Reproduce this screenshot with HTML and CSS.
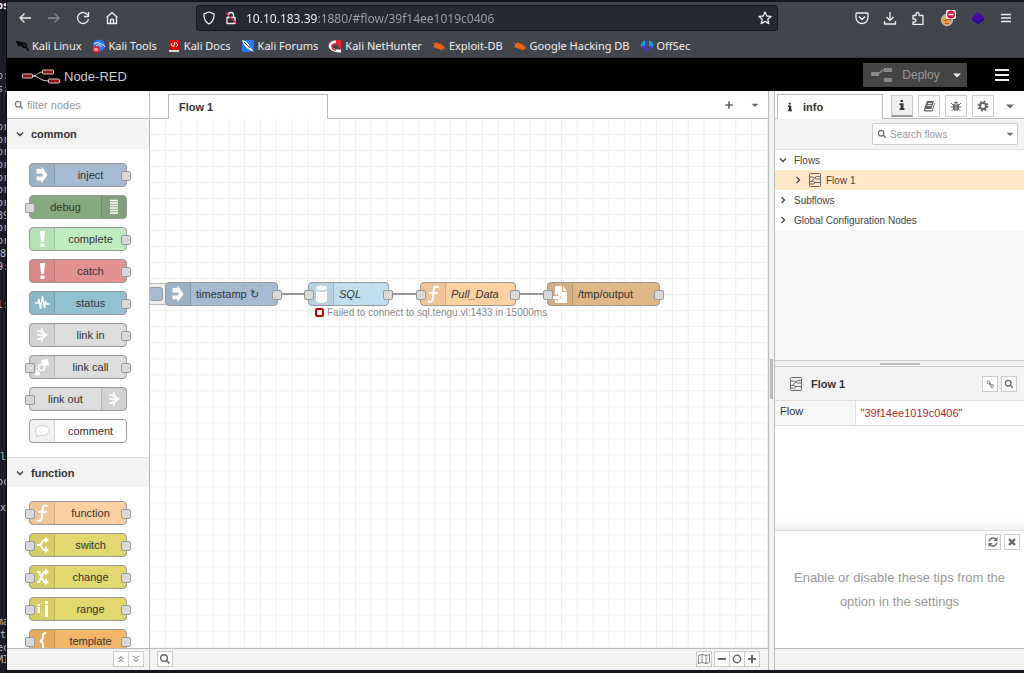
FILE: index.html
```
<!DOCTYPE html>
<html lang="en">

<head>
    <meta charset="utf-8">
    <title>Node-RED</title>
    <link rel="stylesheet" href="styles.css">
</head>

<body>

    <!-- shared icons -->
    <svg class="sprite" aria-hidden="true">
        <symbol id="i-inject" viewBox="1 1 22 22"><path fill="#fff" d="M6.500 6h5V3.500L17.500 12l-6 8.500v-3h-5v-4H12l1-1.500-1-1.500H6.500z"/></symbol>
        <symbol id="i-debug" viewBox="1 1 22 22"><path stroke="#fff" stroke-width="1.400" d="M8 5.500h8M8 8h8M8 10.500h8M8 13h8M8 15.500h8M8 18h8"/></symbol>
        <symbol id="i-alert" viewBox="1 1 22 22"><path fill="#fff" d="M10 4h5l-1 11h-3zM10.500 16.500h4v3.500h-4z"/></symbol>
        <symbol id="i-status" viewBox="1 1 22 22"><path fill="none" stroke="#fff" stroke-width="1.500" d="M5 12h3l1-4 1.500 10 2-13 2 12 1-7 1 3h3"/></symbol>
        <symbol id="i-link" viewBox="1 1 22 22"><path fill="#fff" d="M11 4l3 5 4 3-4 3-3 5.500V16l1.500-1v-6L11 8z"/><path fill="none" stroke="#fff" stroke-width="1.500" d="M7 7.500c3 0 4 1 4.500 2.500M7 16.500c3 0 4-1 4.500-2.500M7 12h6"/></symbol>
        <symbol id="i-call" viewBox="1 1 22 22"><path fill="#fff" d="M11 5l7-1 1 7-2-1-2 2-4-4 1-1.500zM6 14l4 4-1 3-4-1z"/><circle cx="11.500" cy="12.500" r="3" fill="none" stroke="#fff" stroke-width="1.500"/></symbol>
        <symbol id="i-comment" viewBox="1 1 22 22"><path fill="#fff" stroke="#ccc" d="M12.500 6.500c4 0 6.500 2 6.500 5s-3 5-6.500 5c-1 0-2 0-3-.500-1 1.500-2 2-3.500 2 1-1 1.500-2 1-3-1-1-1.500-2-1.500-3.500 0-3 3-5 7-5z"/></symbol>
        <symbol id="i-fn" viewBox="1 1 22 22"><path fill="none" stroke="#fff" stroke-width="2" stroke-linecap="round" d="M17 5c-3-1.500-4 0-4.300 3l-.7 8c-.3 3.500-2 4.500-4.500 3.500M9 11h7"/></symbol>
        <symbol id="i-switch" viewBox="1 1 22 22"><path fill="none" stroke="#fff" stroke-width="2" d="M7 12h3l4-5h2M10 12l4 5h2"/><path fill="#fff" d="M15 3.500l4 3.500-4 3.500zM15 13.500l4 3.500-4 3.500z"/></symbol>
        <symbol id="i-change" viewBox="1 1 22 22"><path fill="none" stroke="#fff" stroke-width="2" d="M7 7h2l5 10h2M7 17h2l5-10h2"/><path fill="#fff" d="M15 3.500l4 3.500-4 3.500zM15 13.500l4 3.500-4 3.500z"/></symbol>
        <symbol id="i-range" viewBox="1 1 22 22"><path fill="#fff" d="M7.500 7h2.500v2H7.500zM7.500 10h2.500v6H7.500zM15 4h3v3h-3zM15 8h3v12h-3z"/><path stroke="#fff" stroke-dasharray="1 1.500" d="M11 7l4-3M11 16l4 4"/></symbol>
        <symbol id="i-template" viewBox="1 1 22 22"><path fill="none" stroke="#fff" stroke-width="2" d="M16 4c-3 0-3 1-3 4 0 2-1 3.500-3 4 2 .5 3 2 3 4 0 3 0 4 3 4"/></symbol>
        <symbol id="i-db" viewBox="1 1 22 22"><path fill="#fff" d="M7 8.500c2 2 9 2 11 0V19c-2 2.500-9 2.500-11 0z"/><ellipse cx="12.500" cy="6" rx="5.500" ry="2.300" fill="#fff"/></symbol>
        <symbol id="i-file" viewBox="1 1 22 22"><path fill="#fff" d="M7 4h7v6h5v11H7v-3h2v2l5-4.500-5-4.500v2H7z"/><path fill="#fff" d="M15 4l4 5h-4zM4 14h6v-2.500l3 4-3 4V17H4z"/></symbol>
        <symbol id="i-search" viewBox="0 0 12 12"><circle cx="5" cy="5" r="3.300" fill="none" stroke="currentColor" stroke-width="1.400"/><path stroke="currentColor" stroke-width="1.700" d="M7.500 7.500l3 3"/></symbol>
        <symbol id="i-right" viewBox="0 0 12 12"><path fill="none" stroke="currentColor" stroke-width="1.300" d="M4.500 3l3 3-3 3"/></symbol>
        <symbol id="i-down" viewBox="0 0 12 12"><path fill="none" stroke="currentColor" stroke-width="1.300" d="M3 4.500l3 3 3-3"/></symbol>
        <symbol id="i-caret" viewBox="0 0 12 12"><path fill="currentColor" d="M2 4.500h8L6 8.500z"/></symbol>
        <symbol id="i-flow" viewBox="1 1 12 14"><g fill="none" stroke="currentColor"><rect x="1.500" y="1.500" width="11" height="13" rx="1"/><rect x="7.500" y="4.500" width="5" height="2.500" rx="1"/><rect x="1.500" y="9.500" width="5" height="2.500" rx="1"/><path d="M1.500 5h2.500c2 0 1 1 3.500 1M6.500 10.500h6M4 9.500c0-2 3-3.500 3.500-3.500"/></g></symbol>
        <symbol id="i-info" viewBox="0 0 12 12"><path fill="currentColor" d="M4.500 1h2.500v2H4.500zM3.500 4.300H7.500v5H8.500V11h-5V9.300h1.200V6H3.500z"/></symbol>
        <symbol id="i-dragon" viewBox="0 0 14 14"><path fill="none" stroke="#050505" stroke-width="1.600" d="M1 2.500l6 1.500 3 .5 2 2.500M2 5l5-1M3 7l4-2c0 3 4 3 5 4s1 3 1 3M7 6c0 2 1 2 3 2.500"/></symbol>
        <symbol id="i-bug-db" viewBox="0 0 14 14"><path fill="#f26211" d="M1 4l3 .5L5 3l1.500 1.500L9 5l2 2 2 1-1 1 1 1.500-2.500-.5L9 11.500 7.500 10 5 9.500 3 8.500 1 8l1.500-1.500z"/></symbol>
    </svg>

    <!-- terminal behind the browser -->
    <div class="terminal" aria-hidden="true">
        <div class="term-top"><span>os</span></div>
        <div class="term-rows">
            <span class="r1">o:</span><span class="r2">s:</span>
            <span class="r5">or</span><span class="r6">or</span><span class="r7">or</span><span class="r8">or</span><span class="r9">or</span><span class="r10">or</span><span class="r11">or</span><span class="r12">39</span><span class="r13">or</span><span class="r14">or</span><span class="r15">8</span><span class="r16">9:</span>
            <span class="r19">l:</span><span class="r31">l</span><span class="r33">oc</span><span class="r35">x</span>
            <span class="r44">ma</span><span class="r45">t</span><span class="r46">ec</span><span class="r47">MI</span>
        </div>
    </div>

    <div class="window">

        <nav class="toolbar">
            <div class="nav-buttons">
                <button type="button" aria-label="Back"><svg viewBox="0 0 14 14"><path d="M13 7H2M6.500 2.500L2 7l4.500 4.500"/></svg></button>
                <button type="button" aria-label="Forward" disabled><svg viewBox="0 0 14 14"><path d="M1 7h11M7.500 2.500L12 7l-4.500 4.500"/></svg></button>
                <button type="button" aria-label="Reload"><svg viewBox="0 0 14 14"><path d="M12 4.500A5.500 5.500 0 1 0 12.500 8"/><path d="M12.500 1v4.500H8"/></svg></button>
                <button type="button" aria-label="Home"><svg viewBox="0 0 14 14"><path d="M1.500 6.500L7 1.500l5.500 5M2.500 6v6.500h9V6M5.500 12.500v-4h3v4"/></svg></button>
            </div>
            <div class="urlbar">
                <svg class="url-icon" viewBox="0 0 14 14"><path d="M7 1l5 1.800c.3 5-1.500 8.500-5 10.200-3.500-1.700-5.300-5.200-5-10.200z"/></svg>
                <svg class="url-icon" viewBox="0 0 14 14"><path d="M3 6.500h8v6H3zM4.500 6.500V4a2.500 2.500 0 0 1 5 0v2.500"/><path class="slash" d="M1.500 1.500l11 11"/></svg>
                <input class="url" type="text" aria-label="Address" value="10.10.183.39:1880/#flow/39f14ee1019c0406">
                <button type="button" aria-label="Bookmark this page"><svg viewBox="0 0 14 14"><path d="M7 1l1.800 4 4.200.4-3.200 2.900 1 4.300L7 10.400l-3.800 2.200 1-4.300L1 5.400 5.200 5z"/></svg></button>
            </div>
            <div class="ext-buttons">
                <button type="button" aria-label="Pocket"><svg viewBox="0 0 14 14"><path d="M2 2h10c.6 0 1 .4 1 1v3.500a6 6 0 0 1-12 0V3c0-.6.4-1 1-1zM4 5.500l3 3 3-3"/></svg></button>
                <button type="button" aria-label="Downloads"><svg viewBox="0 0 14 14"><path d="M7 1v8M3.500 6L7 9.500 10.500 6M1.500 10v3h11v-3"/></svg></button>
                <button type="button" aria-label="Extensions"><svg viewBox="0 0 14 14"><path d="M2 4.500h3V3a1.500 1.500 0 0 1 3 0v1.500h4v9H2V11h1.500a1.500 1.500 0 0 0 0-3H2z"/></svg></button>
                <button class="wide" type="button" aria-label="FoxyProxy"><svg viewBox="0 0 18 18"><circle cx="8" cy="11" r="5.500" fill="#f0a050" stroke="#bbb"/><path fill="none" stroke="#a8622a" d="M4.500 11c1.500 1 2.500 1 3.500 0s2-1 4 0M6 14c2 1 3 1 4 0"/><rect x="7" y="1" width="10" height="9" rx="2" fill="#fff" stroke="none"/><circle cx="12" cy="5.500" r="4" fill="#d3143a" stroke="none"/><path stroke="#fff" stroke-width="1.500" d="M9.500 5.500h5"/></svg></button>
                <button type="button" aria-label="Wappalyzer"><svg viewBox="0 0 14 14"><path fill="#230a8c" stroke="none" d="M1 7l6 3 6-3v2l-6 4.500L1 9z"/><path fill="#4608ad" stroke="none" d="M7 1l6 5.500L7 11 1 6.500z"/></svg></button>
                <button type="button" aria-label="Menu"><svg viewBox="0 0 14 14"><path d="M2 3.500h10M2 7h10M2 10.500h10"/></svg></button>
            </div>
        </nav>

        <nav class="bookmarks">
            <a href="#"><svg><use href="#i-dragon"/></svg>Kali Linux</a>
            <a href="#"><svg viewBox="0 0 14 14"><circle cx="7" cy="6.500" r="6" fill="#2777ff"/><path fill="none" stroke="#fff" d="M2 5c3-2 6-1 7 0s3 0 4 3M4 7c2-2 5-1 5 1"/><circle cx="4" cy="10.500" r="3.500" fill="#e0202c"/><path stroke="#fff" d="M3 9v3M5 9v3"/></svg>Kali Tools</a>
            <a href="#"><svg viewBox="0 0 14 14"><path fill="#e10600" d="M2 1h10v10H2z"/><path fill="#ddd" d="M2 11h10v2H2z"/><path fill="none" stroke="#fff" d="M5 4L4 6l2 1M9 4l2 2-2 1.500M8 3L6.500 8"/></svg>Kali Docs</a>
            <a href="#"><svg viewBox="0 0 14 14"><path fill="#257cff" d="M1 1h12v9l-3 3H1z"/><path fill="#fff" d="M1 1l5 2 3 5 4 5-6-3-4-4z"/><path stroke="#333" d="M3 3l6 6"/></svg>Kali Forums</a>
            <a href="#"><svg viewBox="0 0 14 14"><path fill="#f22438" d="M5 1h8v10z"/><path fill="none" stroke="#fff" stroke-width="3" d="M8 3C3 3 1 6 3 9s6 3 10 3"/><path fill="none" stroke="#e22435" stroke-width="1.500" d="M8 5c-5-1-6 6 0 6"/></svg>Kali NetHunter</a>
            <a href="#"><svg><use href="#i-bug-db"/></svg>Exploit-DB</a>
            <a href="#"><svg><use href="#i-bug-db"/></svg>Google Hacking DB</a>
            <a href="#"><svg viewBox="0 0 14 14"><path fill="#11a5d5" d="M5 1.500v9C-1 9-.500 3 5 1.500zM9 1.500v9c6-1.500 5.500-7.500 0-9z"/><path fill="#5633dd" d="M1.300 7H5v4C3 10.500 2 9 1.300 7zM9 7h3.700c-.7 2-1.700 3.500-3.700 4zM6.200 1h1.600v12H6.200z"/></svg>OffSec</a>
        </nav>

        <header class="red-header">
            <a class="logo" href="#">
                <svg viewBox="0 0 38 16"><path fill="none" stroke="#ddd" d="M10 8c6 0 5-4 11-4M10 8c8 0 7 5 17 5"/><g fill="#8f1010" stroke="#ccc"><rect x=".5" y="6" width="10" height="4" rx="1"/><rect x="20.500" y="2" width="11" height="4" rx="1"/><rect x="26.500" y="11" width="11" height="4" rx="1"/></g></svg>
                <span>Node-RED</span>
            </a>
            <div class="deploy-group">
                <button class="deploy" type="button" disabled>
                    <svg viewBox="0 0 24 16"><path fill="none" stroke="#888" stroke-width="1.500" d="M6 7c5 0 4-4 9-4"/><path fill="#888" d="M1 5h8v4H1zM14 1h8v4h-8zM14 11h8v4h-8z"/></svg>
                    Deploy
                </button>
                <button class="deploy-menu" type="button" aria-label="Deploy options"><svg><use href="#i-caret"/></svg></button>
            </div>
            <button class="main-menu" type="button" aria-label="Main menu"><i></i><i></i><i></i></button>
        </header>

        <main class="editor">

            <aside class="palette">
                <label class="filter">
                    <svg><use href="#i-search"/></svg>
                    <input type="text" placeholder="filter nodes" aria-label="filter nodes">
                </label>
                <div class="palette-scroll">
                    <h3 class="category"><svg><use href="#i-down"/></svg>common</h3>
                    <div class="category-nodes">
                        <div class="node c-inject out"><svg class="icon"><use href="#i-inject"/></svg><span>inject</span></div>
                        <div class="node c-debug in flip"><svg class="icon"><use href="#i-debug"/></svg><span>debug</span></div>
                        <div class="node c-complete out"><svg class="icon"><use href="#i-alert"/></svg><span>complete</span></div>
                        <div class="node c-catch out"><svg class="icon"><use href="#i-alert"/></svg><span>catch</span></div>
                        <div class="node c-status out"><svg class="icon"><use href="#i-status"/></svg><span>status</span></div>
                        <div class="node c-link out"><svg class="icon"><use href="#i-link"/></svg><span>link in</span></div>
                        <div class="node c-link in out"><svg class="icon"><use href="#i-call"/></svg><span>link call</span></div>
                        <div class="node c-link in flip"><svg class="icon"><use href="#i-link"/></svg><span>link out</span></div>
                        <div class="node c-comment"><svg class="icon"><use href="#i-comment"/></svg><span>comment</span></div>
                    </div>
                    <h3 class="category"><svg><use href="#i-down"/></svg>function</h3>
                    <div class="category-nodes">
                        <div class="node c-function in out"><svg class="icon"><use href="#i-fn"/></svg><span>function</span></div>
                        <div class="node c-switch in out"><svg class="icon"><use href="#i-switch"/></svg><span>switch</span></div>
                        <div class="node c-switch in out"><svg class="icon"><use href="#i-change"/></svg><span>change</span></div>
                        <div class="node c-switch in out"><svg class="icon"><use href="#i-range"/></svg><span>range</span></div>
                        <div class="node c-template in out"><svg class="icon"><use href="#i-template"/></svg><span>template</span></div>
                    </div>
                </div>
                <footer class="footer palette-footer">
                    <div class="btn-group">
                        <button class="btn" type="button" aria-label="Collapse all"><svg viewBox="0 0 12 12"><path fill="none" stroke="currentColor" d="M3.500 6L6 3.500 8.500 6M3.500 9L6 6.500 8.500 9"/></svg></button>
                        <button class="btn" type="button" aria-label="Expand all"><svg viewBox="0 0 12 12"><path fill="none" stroke="currentColor" d="M3.500 3L6 5.500 8.500 3M3.500 6L6 8.500 8.500 6"/></svg></button>
                    </div>
                </footer>
            </aside>

            <section class="workspace">
                <div class="tabs">
                    <a class="tab flow-tab" href="#">Flow 1</a>
                    <div class="tab-tools">
                        <button type="button" aria-label="Add flow"><svg viewBox="0 0 12 12"><path stroke="currentColor" stroke-width="2" d="M6 1.500v9M1.500 6h9"/></svg></button>
                        <button type="button" aria-label="List flows"><svg><use href="#i-caret"/></svg></button>
                    </div>
                </div>
                <div class="canvas">
                    <div class="inject-button"><button type="button" aria-label="Inject"></button></div>
                    <div class="wire w1"></div>
                    <div class="wire w2"></div>
                    <div class="wire w3"></div>
                    <div class="node c-inject out n-timestamp"><svg class="icon"><use href="#i-inject"/></svg><span>timestamp ↻</span></div>
                    <div class="node c-sql in out n-sql"><svg class="icon"><use href="#i-db"/></svg><em>SQL</em></div>
                    <div class="node c-function in out n-pull"><svg class="icon"><use href="#i-fn"/></svg><em>Pull_Data</em></div>
                    <div class="node c-file in out n-output"><svg class="icon"><use href="#i-file"/></svg><span>/tmp/output</span></div>
                    <div class="node-status"><i></i>Failed to connect to sql.tengu.vl:1433 in 15000ms</div>
                </div>
                <footer class="footer">
                    <button class="btn" type="button" aria-label="Search flows"><svg><use href="#i-search"/></svg></button>
                    <div class="view-tools">
                        <button class="btn" type="button" aria-label="Toggle navigator"><svg viewBox="0 0 12 12"><path fill="none" stroke="currentColor" stroke-width=".8" d="M.5 2.500L4 1.500l4 1 3.500-1v8L8 10.500l-4-1-3.500 1zM4 1.500v8M8 2.500v8"/></svg></button>
                        <div class="btn-group">
                            <button class="btn" type="button" aria-label="Zoom out"><svg viewBox="0 0 12 12"><path stroke="currentColor" stroke-width="2" d="M2 6h8"/></svg></button>
                            <button class="btn" type="button" aria-label="Zoom reset"><svg viewBox="0 0 12 12"><circle cx="6" cy="6" r="3.700" fill="none" stroke="currentColor" stroke-width="1.400"/></svg></button>
                            <button class="btn" type="button" aria-label="Zoom in"><svg viewBox="0 0 12 12"><path stroke="currentColor" stroke-width="2" d="M6 2v8M2 6h8"/></svg></button>
                        </div>
                    </div>
                </footer>
            </section>

            <div class="separator"><i></i></div>

            <aside class="sidebar">
                <div class="tabs">
                    <a class="tab info-tab" href="#"><svg><use href="#i-info"/></svg>info</a>
                    <div class="side-buttons">
                        <button class="selected" type="button" aria-label="Information"><svg><use href="#i-info"/></svg></button>
                        <button type="button" aria-label="Help"><svg viewBox="0 0 12 12"><path fill="currentColor" d="M4 1h7L8.500 9H3c-1 0-1 1 0 1.200h6L11.300 3 12 3.500 9.500 11.500H2.500C1 11.500.5 10 1 9z"/><path stroke="#fff" stroke-width=".8" d="M5 3.500h4M4.500 5.500h4"/></svg></button>
                        <button type="button" aria-label="Debug"><svg viewBox="0 0 12 12"><path fill="currentColor" d="M4 3.500a2 2 0 0 1 4 0zM3 4.200h2.700V11C4 11 3 9.500 3 8zM6.300 4.200H9V8c0 1.500-1 3-2.700 3z"/><path stroke="currentColor" fill="none" d="M1 3l2 2M11 3L9 5M.5 7h3M8.500 7h3M1.500 11l2-2M10.500 11l-2-2"/></svg></button>
                        <button type="button" aria-label="Configuration"><svg viewBox="0 0 12 12"><circle cx="6" cy="6" r="3" fill="none" stroke="currentColor" stroke-width="2"/><circle cx="6" cy="6" r="4.700" fill="none" stroke="currentColor" stroke-width="1.600" stroke-dasharray="1.900 1.790"/></svg></button>
                        <button class="plain" type="button" aria-label="More tabs"><svg><use href="#i-caret"/></svg></button>
                    </div>
                </div>

                <div class="info-toolbar">
                    <label class="search">
                        <svg><use href="#i-search"/></svg>
                        <input type="text" placeholder="Search flows" aria-label="Search flows">
                        <svg><use href="#i-caret"/></svg>
                    </label>
                </div>

                <ul class="tree">
                    <li><svg><use href="#i-down"/></svg>Flows</li>
                    <li class="child selected"><svg><use href="#i-right"/></svg><svg class="flow-icon"><use href="#i-flow"/></svg>Flow 1</li>
                    <li><svg><use href="#i-right"/></svg>Subflows</li>
                    <li><svg><use href="#i-right"/></svg>Global Configuration Nodes</li>
                </ul>

                <div class="panel-grip"><i></i></div>

                <div class="panel-header">
                    <svg class="flow-icon"><use href="#i-flow"/></svg>
                    <h3>Flow 1</h3>
                    <button class="btn" type="button" aria-label="Copy link"><svg viewBox="0 0 12 12"><g fill="none" stroke="currentColor"><circle cx="4" cy="4" r="1.700"/><circle cx="8.500" cy="8.500" r="1.700"/><path d="M5 5l2.500 2.500M7 4.500l-2 3"/></g></svg></button>
                    <button class="btn" type="button" aria-label="Find"><svg><use href="#i-search"/></svg></button>
                </div>
                <table class="props">
                    <tr><th>Flow</th><td>"39f14ee1019c0406"</td></tr>
                </table>
                <div class="panel-body"></div>

                <div class="tips">
                    <div class="tips-buttons">
                        <button class="btn" type="button" aria-label="Next tip"><svg viewBox="0 0 12 12"><path fill="none" stroke="currentColor" stroke-width="1.500" d="M2 5.500a4 4 0 0 1 7-2M10 6.500a4 4 0 0 1-7 2"/><path fill="currentColor" d="M10.500 1v4h-4zM1.500 11V7h4z"/></svg></button>
                        <button class="btn" type="button" aria-label="Close tips"><svg viewBox="0 0 12 12"><path stroke="currentColor" stroke-width="2.400" d="M3 3l6 6M9 3L3 9"/></svg></button>
                    </div>
                    <p>Enable or disable these tips from the option in the settings</p>
                </div>
                <footer class="footer"></footer>
            </aside>

        </main>
    </div>

</body>

</html>
```

FILE: styles.css
```
* {
    box-sizing: border-box;
}
body {
    margin: 0;
    height: 100vh;
    display: flex;
    overflow: hidden;
    background: #1b1c28;
    color: #333;
    font-family: "Liberation Sans", Arial, sans-serif;
    font-size: 11px;
}
.sprite {
    position: absolute;
    width: 0;
    height: 0;
}
svg {
    width: 12px;
    height: 12px;
    flex: none;
    display: block;
}
button {
    display: flex;
    align-items: center;
    justify-content: center;
    padding: 0;
    border: 0;
    background: none;
    color: #666;
    font: inherit;
}
input {
    min-width: 0;
    padding: 0;
    border: 0;
    outline: 0;
    background: none;
    font: inherit;
}
a {
    color: inherit;
    text-decoration: none;
}
h3 {
    margin: 0;
    font-size: 11px;
}

/* terminal strip */
.terminal {
    width: 7px;
    flex: none;
    overflow: hidden;
    display: flex;
    flex-direction: column;
    padding-bottom: 6px;
    border-right: 1px solid #000;
    color: #bbb;
    font: 10px/12px "DejaVu Sans Mono", monospace;
}
.term-top {
    height: 70px;
    display: flex;
    justify-content: center;
    color: #fff;
    font-weight: bold;
}
.term-rows {
    flex: 1;
    display: grid;
    grid-template-columns: 100%;
    grid-template-rows: repeat(47, 1fr);
    justify-items: center;
}
.r1 { grid-row: 1; }
.r2 { grid-row: 2; }
.r5 { grid-row: 5; }
.r6 { grid-row: 6; }
.r7 { grid-row: 7; }
.r8 { grid-row: 8; }
.r9 { grid-row: 9; }
.r10 { grid-row: 10; }
.r11 { grid-row: 11; }
.r12 { grid-row: 12; }
.r13 { grid-row: 13; }
.r14 { grid-row: 14; }
.r15 { grid-row: 15; }
.r16 { grid-row: 16; }
.r19 { grid-row: 19; }
.r31 { grid-row: 31; }
.r33 { grid-row: 33; }
.r35 { grid-row: 35; }
.r44 { grid-row: 44; }
.r45 { grid-row: 45; }
.r46 { grid-row: 46; }
.r47 { grid-row: 47; }

/* browser chrome */
.window {
    flex: 1;
    min-width: 0;
    display: flex;
    flex-direction: column;
    border-top: 2px solid #15161e;
    border-bottom: 3px solid #15161e;
}
.toolbar {
    height: 32px;
    flex: none;
    display: flex;
    align-items: center;
    gap: 77px;
    padding: 0 11px;
    background: #42454c;
}
.toolbar svg {
    width: 14px;
    height: 14px;
    fill: none;
    stroke: #eee;
    stroke-width: 1.3;
    stroke-linejoin: round;
}
.toolbar button:disabled {
    opacity: .4;
}
.nav-buttons {
    display: flex;
    gap: 15px;
}
.ext-buttons {
    display: flex;
    gap: 14px;
}
.toolbar .wide svg {
    width: 18px;
    height: 18px;
}
.urlbar {
    flex: 1;
    height: 26px;
    display: flex;
    align-items: center;
    gap: 8px;
    padding: 0 5px;
    border: 1px solid #15161e;
    border-radius: 3px;
    background: #262833;
    font: 12px "Noto Sans", sans-serif;
}
.toolbar .slash {
    stroke: #e3224d;
}
.url {
    flex: 1;
    background: linear-gradient(to right, #fff 72px, #a2a3aa 72px);
    -webkit-background-clip: text;
    background-clip: text;
    color: transparent;
}
.bookmarks {
    height: 24px;
    flex: none;
    display: flex;
    align-items: center;
    gap: 10px;
    padding: 0 8px;
    border-bottom: 1px solid #33353b;
    background: #42454c;
    color: #eee;
    font: 11px "Noto Sans", sans-serif;
    white-space: nowrap;
}
.bookmarks a {
    display: flex;
    align-items: center;
    gap: 3px;
}
.bookmarks svg {
    width: 14px;
    height: 14px;
}

/* editor header */
.red-header {
    height: 33px;
    flex: none;
    display: flex;
    align-items: center;
    padding: 0 15px;
    background: #000;
    color: #ccc;
}
.logo {
    margin-right: auto;
    display: flex;
    align-items: center;
    gap: 4px;
    font-size: 13px;
    padding-top: 3px;
}
.logo svg {
    width: 38px;
    height: 16px;
}
.deploy-group {
    display: flex;
    margin-right: 28px;
    background: #444;
}
.deploy {
    width: 84px;
    height: 24px;
    gap: 8px;
    color: #999;
    font-size: 12px;
}
.deploy svg {
    width: 24px;
    height: 16px;
}
.deploy-menu {
    width: 20px;
    color: #eee;
}
.main-menu {
    flex-direction: column;
    gap: 3px;
}
.main-menu i {
    width: 14px;
    height: 2px;
    background: #eee;
}

/* editor layout */
.editor {
    flex: 1;
    min-height: 0;
    display: flex;
    background: #fff;
}
.palette {
    width: 143px;
    flex: none;
    display: flex;
    flex-direction: column;
    border-right: 1px solid #bbb;
}
.filter {
    height: 28px;
    flex: none;
    display: flex;
    align-items: center;
    gap: 2px;
    padding: 0 6px;
    border-bottom: 1px solid #bbb;
    color: #777;
}
.filter svg,
.search svg {
    width: 12px;
    height: 10px;
}
.filter input {
    flex: 1;
}
::placeholder {
    color: #999;
    opacity: 1;
}
.palette-scroll {
    flex: 1;
    min-height: 0;
    overflow: hidden;
}
.category {
    height: 30px;
    display: flex;
    align-items: center;
    gap: 5px;
    padding-left: 7px;
    background: #f3f3f3;
}
.category-nodes + .category {
    border-top: 1px solid #ddd;
}
.category-nodes {
    display: flex;
    flex-direction: column;
    gap: 8px;
    padding: 14px 22px;
}

/* nodes */
.node {
    position: relative;
    height: 24px;
    flex: none;
    display: flex;
    align-items: center;
    border: 1px solid #999;
    border-radius: 4px;
}
.node .icon {
    width: 25px;
    height: 22px;
    background: rgba(0, 0, 0, .05);
    border-right: 1px solid rgba(0, 0, 0, .12);
}
.node span {
    flex: 1;
    text-align: center;
}
.node.flip {
    flex-direction: row-reverse;
}
.flip .icon {
    border-right: 0;
    border-left: 1px solid rgba(0, 0, 0, .12);
}
/* ports sit over the node's edges */
.in::before,
.out::after {
    content: "";
    position: absolute;
    top: 7px;
    width: 8px;
    height: 8px;
    border: 1px solid #999;
    border-radius: 2px;
    background: #d9d9d9;
}
.in::before {
    left: -5px;
}
.out::after {
    right: -5px;
}
.c-inject { background: #a6bbcf; }
.c-debug { background: #87a980; }
.c-complete { background: #c0edc0; }
.c-catch { background: #e49191; }
.c-status { background: #94c1d0; }
.c-link { background: #ddd; }
.c-comment { background: #fff; }
.c-function { background: #fdd0a2; }
.c-switch { background: #e2d96e; }
.c-template { background: #f3b567; }
.c-sql { background: #c0deed; }
.c-file { background: #deb887; }

.footer {
    height: 22px;
    flex: none;
    display: flex;
    align-items: center;
    justify-content: space-between;
    padding: 0 8px 1px 7px;
    border-top: 1px solid #bbb;
    background: #f3f3f3;
}
.palette-footer {
    justify-content: flex-end;
    padding: 0 5px 1px;
}
.btn {
    width: 16px;
    height: 16px;
    border: 1px solid #ccc;
    background: #fff;
}
.btn-group {
    display: flex;
}
.btn-group .btn + .btn {
    margin-left: -1px;
}
.view-tools {
    display: flex;
    gap: 2px;
}

/* workspace */
.workspace {
    flex: 1;
    min-width: 0;
    display: flex;
    flex-direction: column;
}
.tabs {
    height: 28px;
    flex: none;
    display: flex;
    align-items: flex-end;
    justify-content: space-between;
    border-bottom: 1px solid #bbb;
}
.tab {
    height: 25px;
    display: flex;
    align-items: center;
    margin-bottom: -1px;
    padding-bottom: 1px;
    border: 1px solid #bbb;
    border-bottom: 0;
    background: #fff;
    font-weight: bold;
}
.flow-tab {
    width: 160px;
    margin-left: 18px;
    padding-left: 10px;
}
.tab-tools {
    height: 27px;
    display: flex;
    gap: 14px;
    padding-right: 7px;
}
.tab-tools svg {
    width: 12px;
    height: 10px;
}
.canvas {
    position: relative;
    flex: 1;
    overflow: hidden;
    background-image: linear-gradient(to left, #eee 1px, transparent 1px), linear-gradient(to top, #eee 1px, transparent 1px);
    background-size: 16px 16px;
    background-repeat: round;
}
.canvas .node {
    position: absolute;
    top: 163px;
}
.canvas .node span,
.canvas .node em {
    flex: none;
    padding-left: 5px;
}
.n-timestamp { left: 15px; width: 113px; }
.n-sql { left: 158px; width: 81px; }
.n-pull { left: 270px; width: 96px; }
.n-output { left: 397px; width: 113px; }
.inject-button {
    position: absolute;
    left: -9px;
    top: 164px;
    width: 26px;
    height: 22px;
    padding: 3px 2px 3px 7px;
    border: 1px solid #bbb;
    background: #eee;
}
.inject-button button {
    width: 14px;
    height: 14px;
    border: 1px solid #999;
    border-radius: 3px;
    background: #a6bbcf;
}
.wire {
    position: absolute;
    top: 174px;
    height: 2px;
    width: 32px;
    background: #999;
}
.w1 { left: 127px; }
.w2 { left: 238px; }
.w3 { left: 366px; }
.node-status {
    position: absolute;
    left: 165px;
    top: 188px;
    display: flex;
    align-items: center;
    gap: 3px;
    background: #fff;
    color: #888;
    font-size: 10px;
}
.node-status i {
    width: 9px;
    height: 9px;
    border: 2px solid #c00;
    border-radius: 2px;
}

.separator {
    width: 7px;
    flex: none;
    display: flex;
    align-items: center;
    padding-bottom: 4px;
    border: 1px solid #bbb;
    border-width: 0 1px;
    background: #f3f3f3;
}
.separator i {
    width: 3px;
    height: 40px;
    margin-left: 1px;
    background: #bbb;
}

/* sidebar */
.sidebar {
    width: 249px;
    flex: none;
    display: flex;
    flex-direction: column;
    background: #f7f7f7;
}
.sidebar .tabs {
    background: #fff;
}
.info-tab {
    width: 106px;
    margin-left: 2px;
    gap: 7px;
    padding-left: 6px;
}
.info-tab svg {
    height: 10px;
}
.side-buttons {
    height: 27px;
    display: flex;
    align-items: center;
    gap: 5px;
    padding: 2px 3px 0 0;
}
.side-buttons button {
    width: 22px;
    height: 22px;
    border: 1px solid #ccc;
    background: #fff;
}
.side-buttons .selected {
    border-bottom: 2px solid #999;
    background: #efefef;
    color: #333;
}
.side-buttons .plain {
    border: 0;
}
.info-toolbar {
    height: 31px;
    flex: none;
    display: flex;
    justify-content: flex-end;
    padding: 4px 6px;
    border-bottom: 1px solid #ddd;
    background: #f3f3f3;
}
.search {
    width: 146px;
    height: 22px;
    display: flex;
    align-items: center;
    gap: 2px;
    padding: 0 1px 0 3px;
    border: 1px solid #ccc;
    border-radius: 2px;
    background: #fff;
    color: #666;
}
.search input {
    flex: 1;
    font-size: 10px;
}
.tree {
    margin: 0;
    padding: 0;
    list-style: none;
    background: #fff;
    font-size: 10px;
}
.tree li {
    height: 20px;
    display: flex;
    align-items: center;
    gap: 5px;
    padding-left: 2px;
    color: #444;
}
.tree .child {
    padding-left: 17px;
}
.tree .selected {
    background: #ffe8c7;
}
.flow-icon {
    width: 12px;
    height: 14px;
    color: #666;
}
.panel-grip {
    height: 7px;
    margin-top: auto;
    display: flex;
    align-items: center;
    justify-content: center;
    border: 1px solid #ccc;
    border-width: 1px 0;
    background: #f3f3f3;
}
.panel-grip i {
    width: 40px;
    height: 2px;
    background: #bbb;
}
.panel-header {
    height: 33px;
    flex: none;
    display: flex;
    align-items: center;
    gap: 3px;
    padding: 0 7px 0 15px;
    background: #f3f3f3;
}
.panel-header h3 {
    flex: 1;
    padding-left: 6px;
}
.panel-header svg {
    width: 12px;
    height: 10px;
}
.panel-header .flow-icon {
    width: 12px;
    height: 14px;
}
.props {
    width: 100%;
    border-collapse: collapse;
    background: #fff;
}
.props th,
.props td {
    height: 25px;
    padding: 0 5px;
    border: 1px solid #ddd;
    border-width: 1px 0;
    text-align: left;
    font-weight: normal;
}
.props th {
    width: 80px;
    padding-bottom: 4px;
    border-right-width: 1px;
    background: #f7f7f7;
}
.props td {
    color: #b72828;
}
.panel-body {
    height: 104px;
    flex: none;
    background: linear-gradient(#fff 92px, #f3f3f3);
}
.tips {
    height: 118px;
    flex: none;
    padding: 3px 4px;
    border-top: 1px solid #ddd;
    background: #fff;
    color: #999;
    text-align: center;
}
.tips-buttons {
    display: flex;
    justify-content: flex-end;
    gap: 3px;
}
.tips p {
    margin: 16px 10px;
    font-size: 13px;
    line-height: 24px;
}
```
